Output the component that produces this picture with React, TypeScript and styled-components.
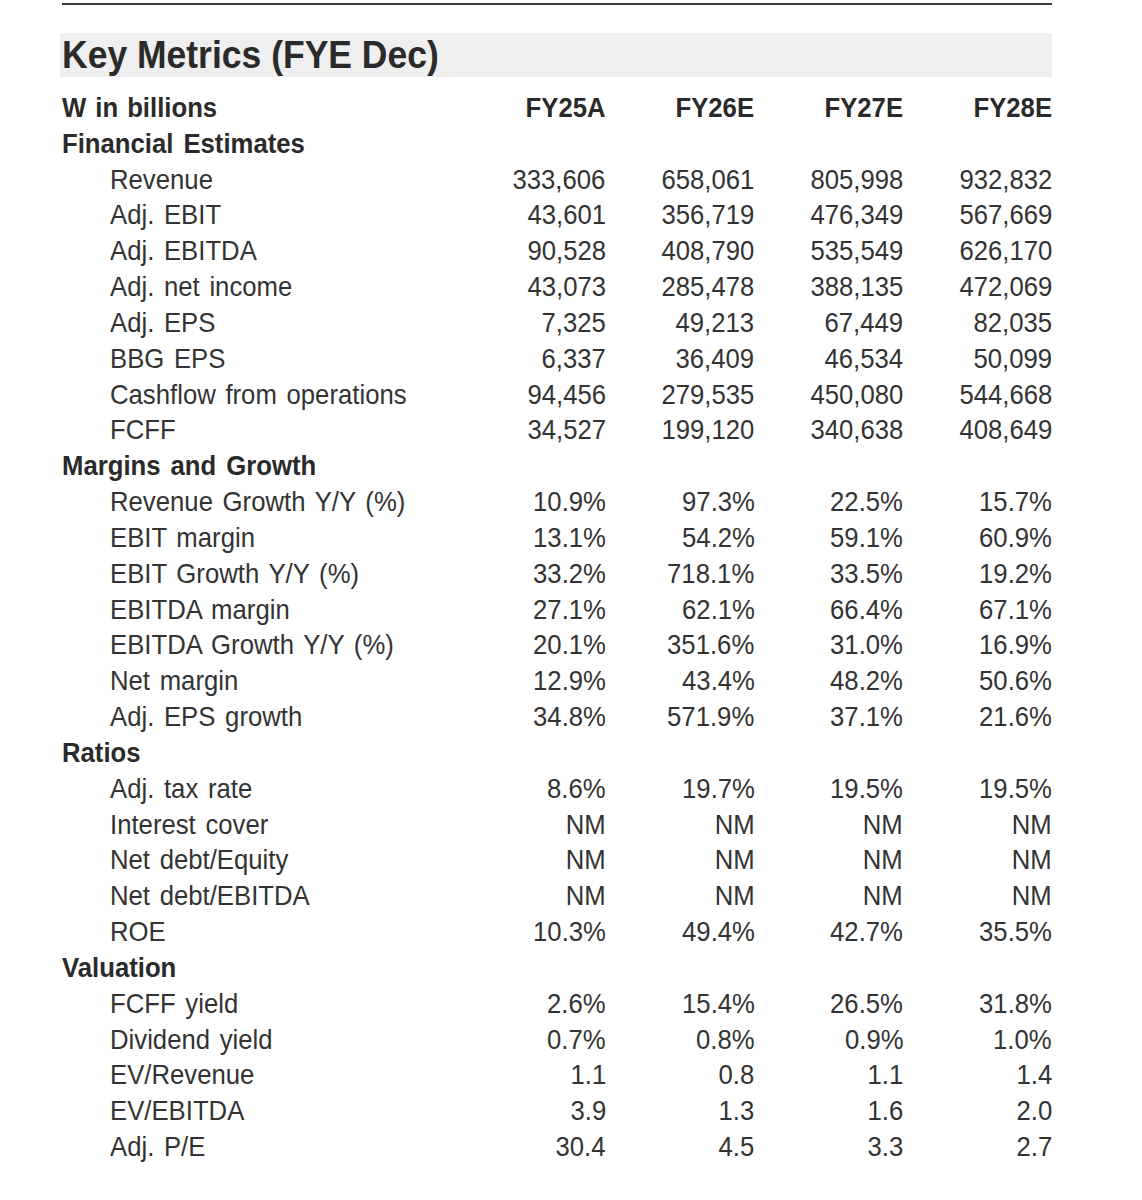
import React from "react";
import styled, { createGlobalStyle } from "styled-components";

const GlobalStyle = createGlobalStyle`
  html, body {
    margin: 0;
    padding: 0;
    background: #ffffff;
  }
  body {
    font-family: "Liberation Sans", Arial, sans-serif;
    color: #333333;
  }
`;

const Page = styled.div`
  width: 990px;
  padding: 3px 0 30px 62px;
  display: flex;
  flex-direction: column;
`;

const TopRule = styled.div`
  height: 2px;
  background: #3c3c3c;
`;

const TitleBar = styled.div`
  margin-top: 28px;
  margin-left: -2px;
  padding-left: 2px;
  height: 44px;
  background: #efefef;
  display: flex;
  align-items: center;
`;

const Squeeze = styled.span<{ $align?: "left" | "right"; $scale?: number; $words?: number }>`
  display: inline-block;
  white-space: nowrap;
  word-spacing: ${(p) => p.$words ?? 0}px;
  transform: scaleX(${(p) => p.$scale ?? 0.935});
  transform-origin: ${(p) => (p.$align === "right" ? "right" : "left")} center;
`;

const Title = styled.h1`
  margin: 0;
  font-size: 38.5px;
  line-height: 44px;
  font-weight: 700;
  color: #2a2a2a;
`;

const Table = styled.div`
  margin-top: 13px;
  display: flex;
  flex-direction: column;
`;

const Row = styled.div`
  display: grid;
  grid-template-columns: 395px repeat(4, 148.75px);
  height: 35.83px;
  align-items: center;
  font-size: 27.5px;
  line-height: 35.83px;
`;

const Label = styled.div<{ $kind: "head" | "section" | "item" }>`
  padding-left: ${(p) => (p.$kind === "item" ? "48px" : "0")};
  font-weight: ${(p) => (p.$kind === "item" ? 400 : 700)};
  color: ${(p) => (p.$kind === "item" ? "#333333" : "#2a2a2a")};
`;

const Value = styled.div<{ $bold?: boolean }>`
  text-align: right;
  font-weight: ${(p) => (p.$bold ? 700 : 400)};
  color: ${(p) => (p.$bold ? "#2a2a2a" : "#333333")};
`;

type Line =
  | { kind: "section"; label: string }
  | { kind: "item"; label: string; values: string[] };

const lines: Line[] = [
  { kind: "section", label: "Financial Estimates" },
  { kind: "item", label: "Revenue", values: ["333,606", "658,061", "805,998", "932,832"] },
  { kind: "item", label: "Adj. EBIT", values: ["43,601", "356,719", "476,349", "567,669"] },
  { kind: "item", label: "Adj. EBITDA", values: ["90,528", "408,790", "535,549", "626,170"] },
  { kind: "item", label: "Adj. net income", values: ["43,073", "285,478", "388,135", "472,069"] },
  { kind: "item", label: "Adj. EPS", values: ["7,325", "49,213", "67,449", "82,035"] },
  { kind: "item", label: "BBG EPS", values: ["6,337", "36,409", "46,534", "50,099"] },
  { kind: "item", label: "Cashflow from operations", values: ["94,456", "279,535", "450,080", "544,668"] },
  { kind: "item", label: "FCFF", values: ["34,527", "199,120", "340,638", "408,649"] },
  { kind: "section", label: "Margins and Growth" },
  { kind: "item", label: "Revenue Growth Y/Y (%)", values: ["10.9%", "97.3%", "22.5%", "15.7%"] },
  { kind: "item", label: "EBIT margin", values: ["13.1%", "54.2%", "59.1%", "60.9%"] },
  { kind: "item", label: "EBIT Growth Y/Y (%)", values: ["33.2%", "718.1%", "33.5%", "19.2%"] },
  { kind: "item", label: "EBITDA margin", values: ["27.1%", "62.1%", "66.4%", "67.1%"] },
  { kind: "item", label: "EBITDA Growth Y/Y (%)", values: ["20.1%", "351.6%", "31.0%", "16.9%"] },
  { kind: "item", label: "Net margin", values: ["12.9%", "43.4%", "48.2%", "50.6%"] },
  { kind: "item", label: "Adj. EPS growth", values: ["34.8%", "571.9%", "37.1%", "21.6%"] },
  { kind: "section", label: "Ratios" },
  { kind: "item", label: "Adj. tax rate", values: ["8.6%", "19.7%", "19.5%", "19.5%"] },
  { kind: "item", label: "Interest cover", values: ["NM", "NM", "NM", "NM"] },
  { kind: "item", label: "Net debt/Equity", values: ["NM", "NM", "NM", "NM"] },
  { kind: "item", label: "Net debt/EBITDA", values: ["NM", "NM", "NM", "NM"] },
  { kind: "item", label: "ROE", values: ["10.3%", "49.4%", "42.7%", "35.5%"] },
  { kind: "section", label: "Valuation" },
  { kind: "item", label: "FCFF yield", values: ["2.6%", "15.4%", "26.5%", "31.8%"] },
  { kind: "item", label: "Dividend yield", values: ["0.7%", "0.8%", "0.9%", "1.0%"] },
  { kind: "item", label: "EV/Revenue", values: ["1.1", "0.8", "1.1", "1.4"] },
  { kind: "item", label: "EV/EBITDA", values: ["3.9", "1.3", "1.6", "2.0"] },
  { kind: "item", label: "Adj. P/E", values: ["30.4", "4.5", "3.3", "2.7"] },
];

const years = ["FY25A", "FY26E", "FY27E", "FY28E"];

export default function App() {
  return (
    <>
      <GlobalStyle />
      <Page>
        <TopRule />
        <TitleBar>
          <Title>
            <Squeeze $scale={0.922}>Key Metrics (FYE Dec)</Squeeze>
          </Title>
        </TitleBar>
        <Table>
          <Row>
            <Label $kind="head">
              <Squeeze $words={2}>W in billions</Squeeze>
            </Label>
            {years.map((y) => (
              <Value key={y} $bold>
                <Squeeze $align="right">{y}</Squeeze>
              </Value>
            ))}
          </Row>
          {lines.map((line, i) => (
            <Row key={i}>
              <Label $kind={line.kind}>
                <Squeeze $words={line.kind === "item" ? 2.7 : 3}>{line.label}</Squeeze>
              </Label>
              {line.kind === "item"
                ? line.values.map((v, j) => (
                    <Value key={j}>
                      <Squeeze $align="right">{v}</Squeeze>
                    </Value>
                  ))
                : null}
            </Row>
          ))}
        </Table>
      </Page>
    </>
  );
}
